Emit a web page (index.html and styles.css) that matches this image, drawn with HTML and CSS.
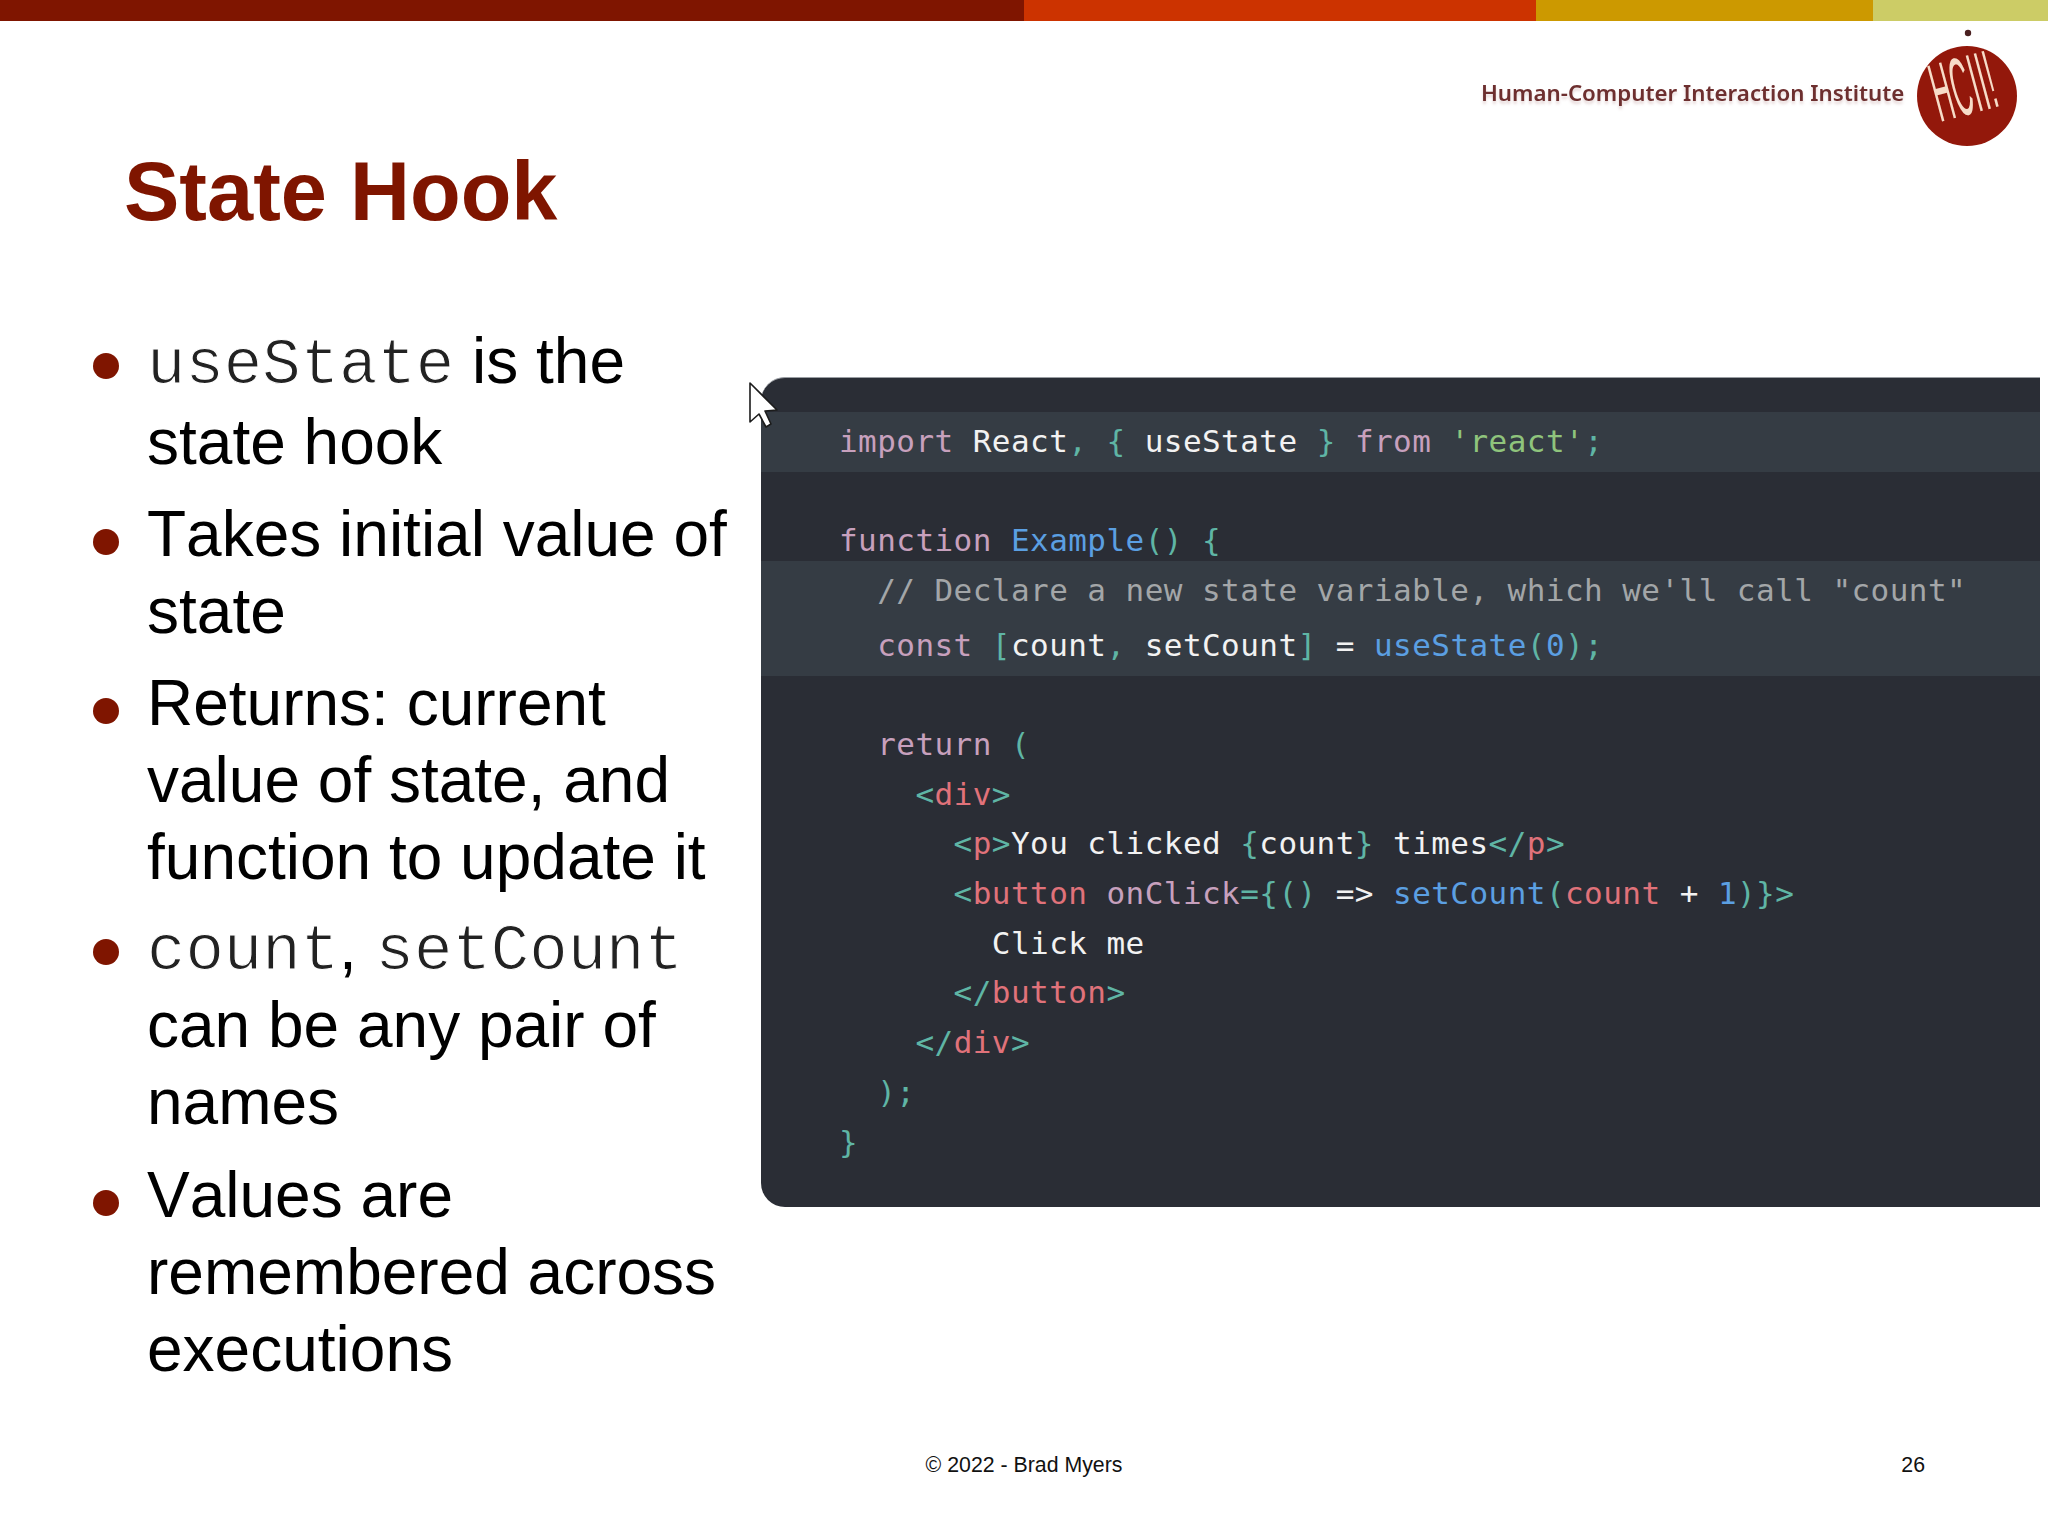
FILE: index.html
```html
<!DOCTYPE html>
<html lang="en">
<head>
<meta charset="utf-8">
<title>State Hook</title>
<link rel="stylesheet" href="styles.css">
</head>
<body>
<div class="slide">
  <div class="bar">
    <div class="seg seg-a"></div>
    <div class="seg seg-b"></div>
    <div class="seg seg-c"></div>
    <div class="seg seg-d"></div>
  </div>
  <header class="head">
    <h1 class="title">State Hook</h1>
    <div class="brand">
      <div class="brand-name">Human-Computer Interaction Institute</div>
      <svg class="brand-mark" viewBox="0 0 110 125" width="110" height="125" aria-hidden="true">
        <circle cx="56" cy="5" r="3.2" fill="#4a2020"/>
        <circle cx="55" cy="68" r="50" fill="#93180b"/>
        <text class="mark-text" transform="translate(28 94) rotate(-15) scale(1 3.2)">HCII!</text>
      </svg>
    </div>
  </header>
  <main class="main">
    <ul class="points">
      <li class="point"><span class="dot"></span><p class="point-text"><span class="mono mono-tall">useState</span> is the state hook</p></li>
      <li class="point"><span class="dot dot-low"></span><p class="point-text">Takes initial value of state</p></li>
      <li class="point"><span class="dot dot-low"></span><p class="point-text">Returns: current value of state, and function to update it</p></li>
      <li class="point point-tight"><span class="dot"></span><p class="point-text"><span class="mono">count</span><span class="sep">, </span><span class="mono">setCount</span> can be any pair of names</p></li>
      <li class="point point-loose"><span class="dot dot-low"></span><p class="point-text">Values are remembered across executions</p></li>
    </ul>
    <section class="code">
      <div class="hl hl-one">
        <div class="ln"><span class="k">import</span> <span class="w">React</span><span class="t">,</span> <span class="t">{</span> <span class="w">useState</span> <span class="t">}</span> <span class="k">from</span> <span class="s">'react'</span><span class="t">;</span></div>
      </div>
      <div class="gap-a"></div>
      <div class="ln ln-short"><span class="k">function</span> <span class="b">Example</span><span class="t">()</span> <span class="t">{</span></div>
      <div class="hl hl-two">
        <div class="ln"><span class="c">  // Declare a new state variable, which we'll call "count"</span></div>
        <div class="ln"><span class="k">  const</span> <span class="t">[</span><span class="w">count</span><span class="t">,</span> <span class="w">setCount</span><span class="t">]</span> <span class="w">=</span> <span class="b">useState</span><span class="t">(</span><span class="b">0</span><span class="t">)</span><span class="t">;</span></div>
      </div>
      <div class="gap-b"></div>
      <div class="ln lnm"><span class="k">  return</span> <span class="t">(</span></div>
      <div class="ln lnm"><span class="t">    &lt;</span><span class="r">div</span><span class="t">&gt;</span></div>
      <div class="ln lnm"><span class="t">      &lt;</span><span class="r">p</span><span class="t">&gt;</span><span class="w">You clicked </span><span class="t">{</span><span class="w">count</span><span class="t">}</span><span class="w"> times</span><span class="t">&lt;/</span><span class="r">p</span><span class="t">&gt;</span></div>
      <div class="ln lnm"><span class="t">      &lt;</span><span class="r">button</span> <span class="k">onClick</span><span class="t">={()</span> <span class="w">=&gt;</span> <span class="b">setCount</span><span class="t">(</span><span class="r">count</span> <span class="w">+</span> <span class="b">1</span><span class="t">)}&gt;</span></div>
      <div class="ln lnm"><span class="w">        Click me</span></div>
      <div class="ln lnm"><span class="t">      &lt;/</span><span class="r">button</span><span class="t">&gt;</span></div>
      <div class="ln lnm"><span class="t">    &lt;/</span><span class="r">div</span><span class="t">&gt;</span></div>
      <div class="ln lnm"><span class="t">  );</span></div>
      <div class="ln lnm"><span class="t">}</span></div>
    </section>
  </main>
  <footer class="foot">
    <span></span>
    <span class="foot-copy">© 2022 - Brad Myers</span>
    <span class="foot-num">26</span>
  </footer>
  <svg class="cursor" viewBox="0 0 30 46" width="30" height="46" aria-hidden="true">
    <path d="M1 1 L1 40 L10 32 L17 45 L22 42 L16 29 L28 28 Z" fill="#ffffff" stroke="#1c1c1c" stroke-width="1.6" stroke-linejoin="round"/>
  </svg>
</div>
</body>
</html>
```
FILE: styles.css
```css
* { box-sizing: border-box; }
html, body { margin: 0; padding: 0; background: #fff; }
.slide {
  position: relative;
  width: 2048px;
  height: 1536px;
  display: flex;
  flex-direction: column;
  overflow: hidden;
  font-family: "Liberation Sans", Arial, sans-serif;
  color: #000;
}
.bar { display: flex; height: 21px; flex: none; }
.seg { height: 100%; }
.seg-a { width: 1024px; background: #7f1500; }
.seg-b { width: 512px; background: #cc3300; }
.seg-c { width: 337px; background: #cc9900; }
.seg-d { flex: 1; background: #cccc66; }

.head {
  height: 302px;
  flex: none;
  display: flex;
  justify-content: space-between;
  align-items: flex-start;
}
.title {
  margin: 129px 0 0 124px;
  font-size: 83px;
  line-height: 84px;
  font-weight: 700;
  color: #7f1500;
}
.brand { display: flex; align-items: flex-start; gap: 8px; margin: 7px 26px 0 0; }
.brand-name {
  margin-top: 50px;
  width: 423px;
  white-space: nowrap;
  font-family: "Noto Sans", sans-serif;
  font-size: 22.3px;
  line-height: 30px;
  font-weight: 600;
  color: #6d2f2f;
  filter: blur(0.6px);
  text-shadow: 0 3px 3px rgba(150, 90, 90, 0.25);
}
.brand-mark { display: block; flex: none; filter: blur(0.5px); }
.mark-text {
  font-family: "Liberation Sans", sans-serif;
  font-size: 26px;
  letter-spacing: 1px;
  fill: #f7dcc8;
}

.main { flex: 1; display: flex; align-items: flex-start; min-height: 0; }
.points {
  list-style: none;
  margin: 0;
  padding: 0 20px 0 93px;
  flex: 0 0 761px;
  display: flex;
  flex-direction: column;
  gap: 15px;
}
.point { display: flex; gap: 28px; align-items: flex-start; }
.point-tight { margin-top: -2px; }
.point-loose { margin-top: 1px; }
.dot {
  flex: none;
  width: 26px;
  height: 26px;
  margin-top: 30px;
  border-radius: 50%;
  background: #7f1500;
}
.dot-low { margin-top: 33px; }
.point-text { margin: 0; font-size: 64px; line-height: 77px; font-kerning: none; }
.mono {
  font-family: "Liberation Mono", monospace;
  line-height: 70px;
  color: #222;
  -webkit-text-stroke: 1.1px #fff;
}
.mono-tall { line-height: 75px; }
.sep { margin-right: 1px; }

.code {
  flex: none;
  width: 1279px;
  height: 830px;
  margin-top: 54px;
  padding-top: 34px;
  background: #2a2d35;
  border-top: 1px solid #9a9ea3;
  border-radius: 24px 0 0 24px;
  font-family: "DejaVu Sans Mono", monospace;
  font-size: 31px;
  letter-spacing: 0.44px;
  line-height: 44px;
}
.ln { height: 44px; padding-left: 78px; white-space: pre; }
.ln-short { height: 43px; }
.lnm { margin-bottom: 5.7px; }
.hl { background: #353c44; }
.hl-one { padding: 7px 0 9px; }
.hl-two { padding: 7px 0 9px; display: flex; flex-direction: column; gap: 11px; }
.gap-a { height: 46px; }
.gap-b { height: 46px; }
.k { color: #c7a0bd; }
.w { color: #f2f2f2; }
.t { color: #5fb5a5; }
.b { color: #5b9fe2; }
.s { color: #8fc47c; }
.c { color: #a3a6a8; }
.r { color: #e0727a; }

.foot {
  flex: none;
  height: 84px;
  display: grid;
  grid-template-columns: 1fr auto 1fr;
  font-size: 21.3px;
  line-height: 26px;
  color: #111;
}
.foot-num { justify-self: end; padding-right: 123px; }
.cursor { position: absolute; left: 749px; top: 382px; }
```
